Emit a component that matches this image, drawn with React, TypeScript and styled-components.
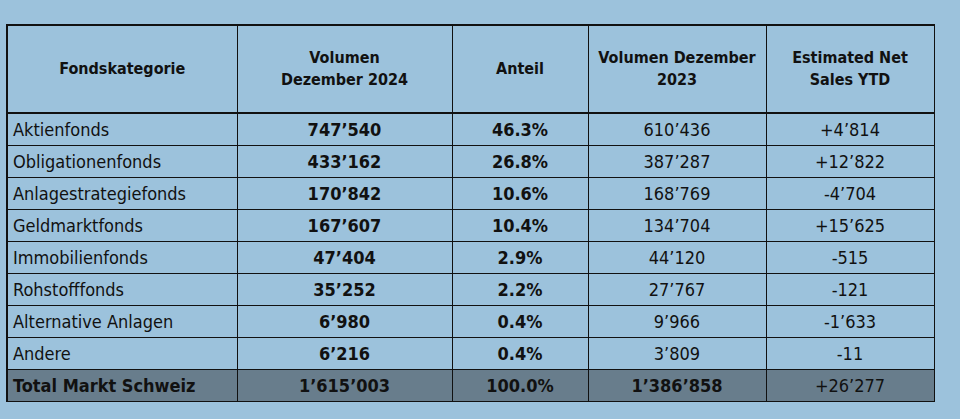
import React from "react";
import styled, { createGlobalStyle } from "styled-components";

const bg = "#9cc2dc";
const totalBg = "#687d8c";
const ink = "#111";

const GlobalStyle = createGlobalStyle`
  html, body {
    margin: 0;
    padding: 0;
    background: ${bg};
  }
  body {
    font-family: "DejaVu Sans Condensed", "DejaVu Sans", sans-serif;
    color: ${ink};
  }
`;

const Page = styled.div`
  width: 960px;
  height: 419px;
  padding: 24px 0 0 6px;
  box-sizing: border-box;
`;

const Table = styled.table`
  width: 927px;
  border-collapse: collapse;
  table-layout: fixed;
  border-left: 2px solid ${ink};
  border-top: 2px solid ${ink};
  border-right: 1.5px solid ${ink};
`;

const HeadCell = styled.th`
  height: 86px;
  padding: 0 4px;
  font-size: 16px;
  font-weight: bold;
  line-height: 22px;
  text-align: center;
  vertical-align: middle;
  border-right: 1px solid ${ink};
  border-bottom: 2px solid ${ink};
`;

const Row = styled.tr<{ $total?: boolean }>`
  background: ${(p) => (p.$total ? totalBg : "transparent")};
`;

const Cell = styled.td<{ $bold?: boolean; $label?: boolean }>`
  height: 31px;
  padding: 0 5px;
  font-size: 18px;
  font-weight: ${(p) => (p.$bold ? "bold" : "normal")};
  text-align: ${(p) => (p.$label ? "left" : "center")};
  vertical-align: middle;
  white-space: nowrap;
  border-right: 1px solid ${ink};
  border-bottom: 1.5px solid ${ink};
`;

type Line = [string, string, string, string, string];

const rows: Line[] = [
  ["Aktienfonds", "747’540", "46.3%", "610’436", "+4’814"],
  ["Obligationenfonds", "433’162", "26.8%", "387’287", "+12’822"],
  ["Anlagestrategiefonds", "170’842", "10.6%", "168’769", "-4’704"],
  ["Geldmarktfonds", "167’607", "10.4%", "134’704", "+15’625"],
  ["Immobilienfonds", "47’404", "2.9%", "44’120", "-515"],
  ["Rohstofffonds", "35’252", "2.2%", "27’767", "-121"],
  ["Alternative Anlagen", "6’980", "0.4%", "9’966", "-1’633"],
  ["Andere", "6’216", "0.4%", "3’809", "-11"],
];

const total: Line = ["Total Markt Schweiz", "1’615’003", "100.0%", "1’386’858", "+26’277"];

export default function App() {
  return (
    <>
      <GlobalStyle />
      <Page>
        <Table>
          <colgroup>
            <col style={{ width: 230 }} />
            <col style={{ width: 215 }} />
            <col style={{ width: 136 }} />
            <col style={{ width: 178 }} />
            <col style={{ width: 168 }} />
          </colgroup>
          <thead>
            <tr>
              <HeadCell>Fondskategorie</HeadCell>
              <HeadCell>
                Volumen
                <br />
                Dezember 2024
              </HeadCell>
              <HeadCell>Anteil</HeadCell>
              <HeadCell>
                Volumen Dezember
                <br />
                2023
              </HeadCell>
              <HeadCell>
                Estimated Net
                <br />
                Sales YTD
              </HeadCell>
            </tr>
          </thead>
          <tbody>
            {rows.map((r) => (
              <Row key={r[0]}>
                <Cell $label>{r[0]}</Cell>
                <Cell $bold>{r[1]}</Cell>
                <Cell $bold>{r[2]}</Cell>
                <Cell>{r[3]}</Cell>
                <Cell>{r[4]}</Cell>
              </Row>
            ))}
            <Row $total>
              <Cell $label $bold>{total[0]}</Cell>
              <Cell $bold>{total[1]}</Cell>
              <Cell $bold>{total[2]}</Cell>
              <Cell $bold>{total[3]}</Cell>
              <Cell>{total[4]}</Cell>
            </Row>
          </tbody>
        </Table>
      </Page>
    </>
  );
}
